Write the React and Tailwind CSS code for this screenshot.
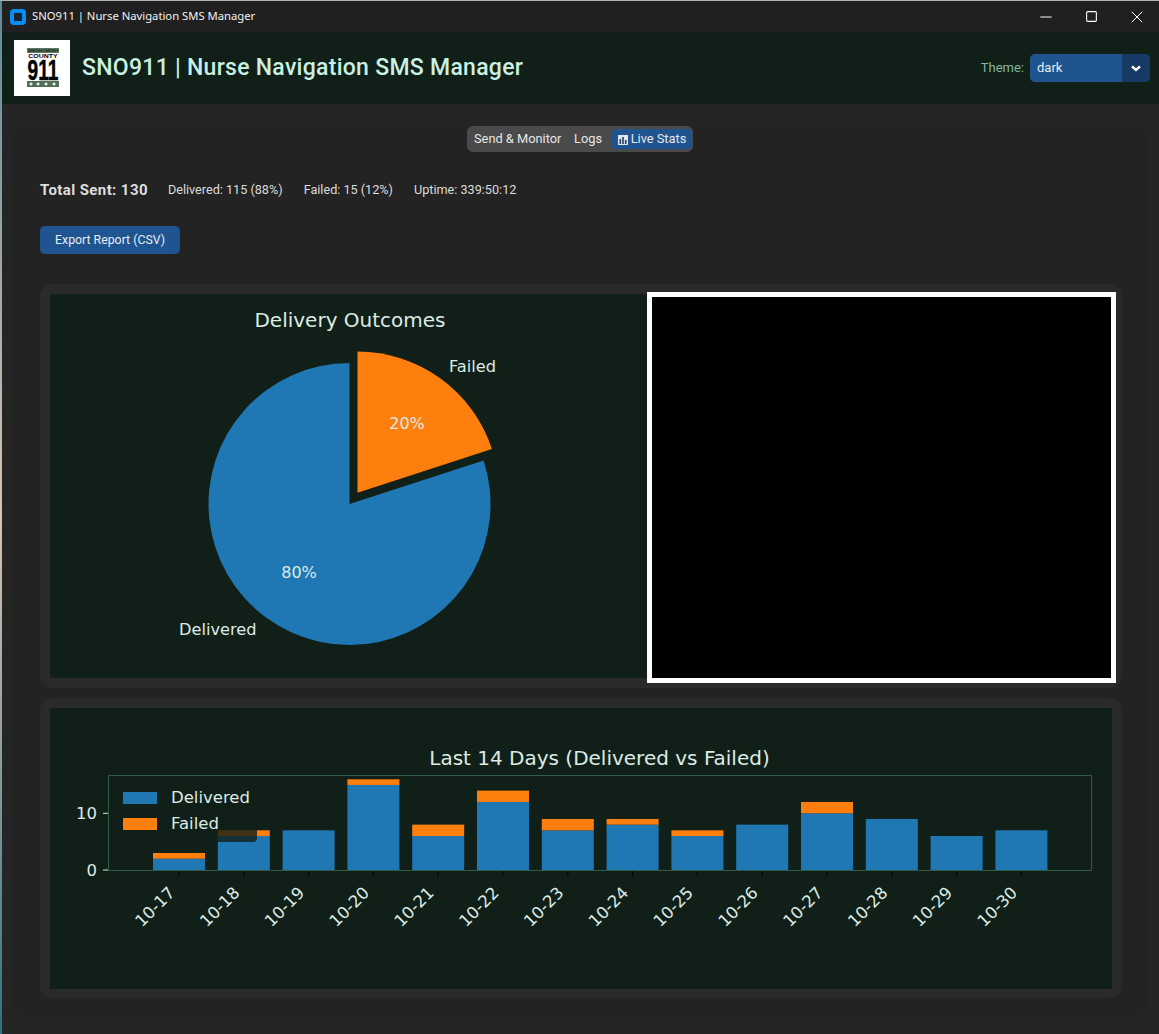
import React from "react";
import { Minus, Square, X } from "lucide-react";

const days = [
  ["10-17", 2, 1],
  ["10-18", 6, 1],
  ["10-19", 7, 0],
  ["10-20", 15, 1],
  ["10-21", 6, 2],
  ["10-22", 12, 2],
  ["10-23", 7, 2],
  ["10-24", 8, 1],
  ["10-25", 6, 1],
  ["10-26", 8, 0],
  ["10-27", 10, 2],
  ["10-28", 9, 0],
  ["10-29", 6, 0],
  ["10-30", 7, 0],
];

const chartText = "#dcebe4";
const chartFont = "'DejaVu Sans', sans-serif";
const logoFont = "'Liberation Sans', sans-serif";

function Logo() {
  return (
    <svg width="56" height="56" viewBox="0 0 56 56" className="block shrink-0 bg-white" style={{ fontFamily: logoFont }}>
      <rect x="13" y="8" width="32" height="5" fill="#5a7a62" />
      <text transform="translate(29 12.3) scale(1.1 1)" textAnchor="middle" fontSize="4.4" fontWeight="700" fill="#1c1c1c">SNOHOMISH</text>
      <text transform="translate(29 18.4) scale(1.12 1)" textAnchor="middle" fontSize="6.2" fontWeight="700" fill="#000">COUNTY</text>
      <text transform="translate(29 40) scale(0.66 1)" textAnchor="middle" fontSize="29" fontWeight="700" fill="#000" stroke="#000" strokeWidth="0.5">911</text>
      <rect x="13" y="41" width="32" height="6" fill="#4f6f57" />
      {[17, 24, 32, 40].map((x) => (
        <path key={x} d={`M${x} 42.2 l2 1.8 l-2 1.8 l-2 -1.8 Z`} fill="#e6ece7" />
      ))}
    </svg>
  );
}

function PieChart() {
  return (
    <svg width="597" height="384" viewBox="50 294 597 384" className="block shrink-0 bg-[#111f19]" style={{ fontFamily: chartFont }}>
      <text x="350" y="327" textAnchor="middle" fontSize="20" fill={chartText}>Delivery Outcomes</text>
      <path d="M349.5 504 L483.6 460.4 A141 141 0 1 1 349.5 363 Z" fill="#1f77b4" />
      <path d="M357.5 492.8 L357.5 351.5 A141.3 141.3 0 0 1 491.9 449.1 Z" fill="#ff7f0e" />
      <text x="449" y="372" fontSize="16.2" fill={chartText}>Failed</text>
      <text x="179" y="635" fontSize="16.2" fill={chartText}>Delivered</text>
      <text x="407" y="429" textAnchor="middle" fontSize="16" fill={chartText}>20%</text>
      <text x="299" y="578" textAnchor="middle" fontSize="16" fill={chartText}>80%</text>
    </svg>
  );
}

function BarChart() {
  const y0 = 870;
  const unit = 5.67;
  return (
    <svg width="1062" height="281" viewBox="50 708 1062 281" className="block bg-[#111f19]" style={{ fontFamily: chartFont }}>
      <text x="599.5" y="765" textAnchor="middle" fontSize="20" fill={chartText}>Last 14 Days (Delivered vs Failed)</text>
      {days.map(([label, ok, bad], i) => {
        const cx = 179 + i * 64.8;
        return (
          <g key={label}>
            <rect x={cx - 26} y={y0 - ok * unit} width="52" height={ok * unit} fill="#1f77b4" />
            {bad > 0 && <rect x={cx - 26} y={y0 - (ok + bad) * unit} width="52" height={bad * unit} fill="#ff7f0e" />}
            <line x1={cx} x2={cx} y1="871" y2="876" stroke="#000" />
            <text x={cx - 24} y="907" textAnchor="middle" dominantBaseline="central" fontSize="16.5" fill={chartText} transform={`rotate(-45 ${cx - 24} 907)`}>{label}</text>
          </g>
        );
      })}
      <rect x="108.5" y="775.5" width="983" height="95" fill="none" stroke="#2f5a48" />
      <line x1="103" x2="108" y1="813.3" y2="813.3" stroke={chartText} />
      <line x1="103" x2="108" y1="870" y2="870" stroke={chartText} />
      <text x="97" y="819" textAnchor="end" fontSize="16.5" fill={chartText}>10</text>
      <text x="97" y="876" textAnchor="end" fontSize="16.5" fill={chartText}>0</text>
      {/* legend frame only shows where it sits on the bar */}
      <rect x="116" y="783" width="141" height="59" rx="4" fill="#111f19" fillOpacity="0.8" />
      <rect x="123" y="792" width="34" height="12" fill="#1f77b4" />
      <rect x="123" y="818" width="34" height="12" fill="#ff7f0e" />
      <text x="171" y="803" fontSize="16.5" fill={chartText}>Delivered</text>
      <text x="171" y="829" fontSize="16.5" fill={chartText}>Failed</text>
    </svg>
  );
}

export default function App() {
  return (
    <div className="w-[1159px] h-[1034px] overflow-hidden flex flex-col bg-[#252525] font-['Roboto',sans-serif]">
      <div className="h-[1px] shrink-0 bg-[#a9b4bc]" />
      <div className="flex-1 flex min-h-0">
        <div className="w-[2px] shrink-0 bg-linear-to-b from-[#5d8a99] via-[#d9c3b2] to-[#2c7282]" />
        <div className="flex-1 min-w-0 flex flex-col">
          <div className="h-[31px] bg-[#202020] flex items-center shrink-0 pl-[8px] text-white">
            <div className="w-[16px] h-[16px] rounded-[4px] border-[4px] border-[#0a8cf5] bg-[#1a2430]" />
            <span className="ml-[6px] text-[11.25px] font-['Noto_Sans',sans-serif] text-[#f2f2f2]">SNO911 | Nurse Navigation SMS Manager</span>
            <div className="ml-auto flex items-center h-full">
              <div className="w-[45px] flex justify-center"><Minus size={18} strokeWidth={1.3} /></div>
              <div className="w-[46px] flex justify-center"><Square size={13} strokeWidth={2} /></div>
              <div className="w-[45px] flex justify-center"><X size={20} strokeWidth={1.2} /></div>
            </div>
          </div>

          <header className="h-[72px] bg-[#111f19] flex items-center pl-[12px] pr-[9px] shrink-0">
            <Logo />
            <h1 className="ml-[12px] text-[23px] font-medium tracking-[0.28px] text-[#c9f0e0]">SNO911 | Nurse Navigation SMS Manager</h1>
            <div className="ml-auto flex items-center gap-[6px]">
              <span className="text-[13px] text-[#7fb8a0]">Theme:</span>
              <div className="w-[120px] h-[28px] rounded-[5px] bg-[#1f5490] flex items-center overflow-hidden">
                <span className="flex-1 pl-[7px] text-[13px] text-[#e4ecf4]">dark</span>
                <div className="w-[28px] h-full bg-[#163a63] flex items-center justify-center">
                  <svg width="10" height="7" viewBox="0 0 10 7"><path d="M1 1.5 L5 5 L9 1.5" fill="none" stroke="#fff" strokeWidth="2.4" /></svg>
                </div>
              </div>
            </div>
          </header>

          <main className="flex-1 min-h-0">
            <div className="mt-[29px] ml-[10px] w-[1136px] h-[890px] rounded-[12px] bg-[#232323] pl-[28px] pr-[26px]">
              <div className="flex justify-center -mt-[7px] relative -left-[1px]">
                <nav className="w-[226px] h-[26px] bg-[#4a4a4a] rounded-[6px] flex items-center pl-[7px] text-[12.8px] text-[#e6e6e6]">
                  <span className="w-[86px] whitespace-nowrap">Send &amp; Monitor</span>
                  <span className="ml-[14px] w-[28px]">Logs</span>
                  <span className="ml-[10px] h-[20px] w-[80px] rounded-[4px] bg-[#1f5490] flex items-center justify-center gap-[3px]">
                    <svg width="10" height="10" viewBox="0 0 10 10" className="mt-[2px]">
                      <rect width="10" height="10" fill="#dfe6ee" />
                      <rect x="1.5" y="4" width="1.6" height="5" fill="#25405f" />
                      <rect x="4.2" y="2" width="1.6" height="7" fill="#25405f" />
                      <rect x="6.9" y="5" width="1.6" height="4" fill="#25405f" />
                    </svg>
                    Live Stats
                  </span>
                </nav>
              </div>

              <div className="mt-[29px] h-[18px] flex items-center text-[12.65px] text-[#dcdcdc]">
                <span className="text-[15px] font-bold tracking-[0.4px] text-[#dedede]">Total Sent: 130</span>
                <span className="ml-[20px]">Delivered: 115 (88%)</span>
                <span className="ml-[21px]">Failed: 15 (12%)</span>
                <span className="ml-[21px]">Uptime: 339:50:12</span>
              </div>

              <button className="mt-[27px] block w-[140px] h-[28px] rounded-[5px] bg-[#1f5490] text-[12.3px] text-[#e8eef5]">Export Report (CSV)</button>

              <section className="mt-[30px] h-[404px] rounded-[12px] bg-[#2a2a2a] p-[10px] flex">
                <PieChart />
                <div className="w-[469px] h-[391px] -mt-[2px] shrink-0 bg-black border-[5px] border-white" />
              </section>

              <section className="mt-[10px] h-[300px] rounded-[12px] bg-[#2a2a2a] p-[10px]">
                <BarChart />
              </section>
            </div>
          </main>
        </div>
      </div>
    </div>
  );
}
